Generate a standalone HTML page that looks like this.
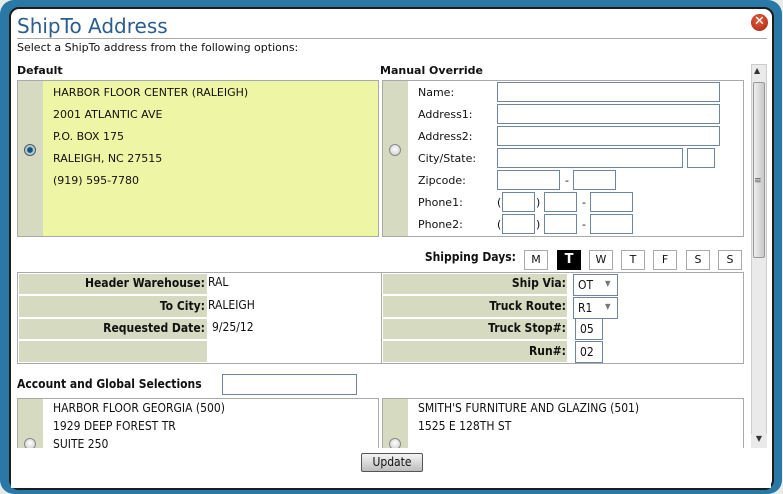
<!DOCTYPE html>
<html><head><style>
*{margin:0;padding:0;box-sizing:border-box}
body{width:783px;height:494px;overflow:hidden;background:#e8ece8;font-family:"DejaVu Sans","Liberation Sans",sans-serif;font-size:11px;color:#111;position:relative}
.a{position:absolute}
.frame{left:0;top:0;width:782px;height:494px;background:#2a78a6;border-radius:14px}
.dlg{left:9px;top:7px;width:765px;height:483px;background:#fff;border:2px solid #1c1c1c;border-radius:10px}
.inp{position:absolute;border:1px solid #6e86a0;background:#fff}
.lbl{position:absolute;font-size:11px}
.b{font-weight:bold}
.gray{position:absolute;background:#d6dac0}
.radio{position:absolute;width:12px;height:12px;border-radius:50%;border:1px solid #888;background:radial-gradient(circle at 50% 40%,#fff,#c8c8c8)}
.day{position:absolute;top:250px;width:24px;height:20px;border:1px solid #aaa;text-align:center;line-height:18px;font-size:11px;background:#fff}
.c{font-family:"DejaVu Sans Condensed","DejaVu Sans",sans-serif;font-size:12px}
.rl{position:absolute;text-align:right;font-weight:bold;font-family:"DejaVu Sans Condensed","DejaVu Sans",sans-serif;font-size:12px}
</style></head><body>
<div class="a frame"></div>
<div class="a dlg"></div>
<div class="a" style="left:17px;top:14px;font-size:20px;color:#2b5e8e;font-family:'DejaVu Sans',sans-serif">ShipTo Address</div>
<div class="a" style="left:17px;top:38px;width:750px;height:1px;background:#aaa"></div>
<div class="a" style="left:751px;top:14px;width:17px;height:17px;border-radius:50%;background:radial-gradient(circle at 45% 35%,#e06040,#a82010);color:#fff;font-weight:bold;font-size:13px;text-align:center;line-height:16px">✕</div>
<div class="lbl" style="left:17px;top:41px">Select a ShipTo address from the following options:</div>
<div class="lbl b" style="left:17px;top:64px">Default</div>
<div class="lbl b" style="left:380px;top:64px">Manual Override</div>
<!-- scrollbar -->
<div class="a" style="left:751px;top:64px;width:16px;height:384px;background:#eaeaea;border:1px solid #ccc"></div>
<div class="a" style="left:753px;top:82px;width:12px;height:176px;background:linear-gradient(90deg,#eee,#c8c8c8);border:1px solid #999;border-radius:2px"></div>
<div class="a" style="left:754px;top:66px;font-size:8px;color:#333">▲</div>
<div class="a" style="left:754px;top:176px;font-size:9px;color:#555">≡</div>
<div class="a" style="left:754px;top:434px;font-size:8px;color:#333">▼</div>
<!-- default box -->
<div class="a" style="left:17px;top:80px;width:362px;height:157px;border:1px solid #aaa;background:#eef5a4"></div>
<div class="gray" style="left:18px;top:81px;width:25px;height:155px"></div>
<div class="a" style="left:24px;top:144px;width:12px;height:12px;border-radius:50%;border:1px solid #556;background:radial-gradient(circle,#1a4f80 35%,#9cc 45%,#ddd)"></div>
<div class="lbl" style="left:53px;top:86px">HARBOR FLOOR CENTER (RALEIGH)</div>
<div class="lbl" style="left:53px;top:108px">2001 ATLANTIC AVE</div>
<div class="lbl" style="left:53px;top:130px">P.O. BOX 175</div>
<div class="lbl" style="left:53px;top:152px">RALEIGH, NC 27515</div>
<div class="lbl" style="left:53px;top:174px">(919) 595-7780</div>
<!-- manual -->
<div class="a" style="left:382px;top:80px;width:362px;height:157px;border:1px solid #aaa;background:#fff"></div>
<div class="gray" style="left:383px;top:81px;width:25px;height:155px"></div>
<div class="radio" style="left:389px;top:144px"></div>
<div class="lbl" style="left:418px;top:86px">Name:</div>
<div class="lbl" style="left:418px;top:108px">Address1:</div>
<div class="lbl" style="left:418px;top:130px">Address2:</div>
<div class="lbl" style="left:418px;top:152px">City/State:</div>
<div class="lbl" style="left:418px;top:174px">Zipcode:</div>
<div class="lbl" style="left:418px;top:196px">Phone1:</div>
<div class="lbl" style="left:418px;top:218px">Phone2:</div>
<div class="inp" style="left:497px;top:82px;width:223px;height:20px"></div>
<div class="inp" style="left:497px;top:104px;width:223px;height:20px"></div>
<div class="inp" style="left:497px;top:126px;width:223px;height:20px"></div>
<div class="inp" style="left:497px;top:148px;width:186px;height:20px"></div>
<div class="inp" style="left:687px;top:148px;width:28px;height:20px"></div>
<div class="inp" style="left:497px;top:170px;width:63px;height:20px"></div>
<div class="lbl" style="left:565px;top:174px">-</div>
<div class="inp" style="left:573px;top:170px;width:43px;height:20px"></div>
<div class="lbl" style="left:497px;top:196px">(</div><div class="inp" style="left:502px;top:192px;width:33px;height:20px"></div><div class="lbl" style="left:536px;top:196px">)</div>
<div class="inp" style="left:544px;top:192px;width:33px;height:20px"></div><div class="lbl" style="left:582px;top:196px">-</div><div class="inp" style="left:590px;top:192px;width:43px;height:20px"></div>
<div class="lbl" style="left:497px;top:218px">(</div><div class="inp" style="left:502px;top:214px;width:33px;height:20px"></div><div class="lbl" style="left:536px;top:218px">)</div>
<div class="inp" style="left:544px;top:214px;width:33px;height:20px"></div><div class="lbl" style="left:582px;top:218px">-</div><div class="inp" style="left:590px;top:214px;width:43px;height:20px"></div>
<!-- shipping days -->
<div class="rl" style="left:400px;top:250px;width:116px">Shipping Days:</div>
<div class="day" style="left:524px">M</div>
<div class="day" style="left:557px;background:#000;color:#fff;border-color:#000;font-weight:bold;font-size:13px">T</div>
<div class="day" style="left:589px">W</div>
<div class="day" style="left:621px">T</div>
<div class="day" style="left:653px">F</div>
<div class="day" style="left:686px">S</div>
<div class="day" style="left:718px">S</div>
<!-- table -->
<div class="a" style="left:17px;top:272px;width:727px;height:92px;border:1px solid #aaa;background:#fff"></div>
<div class="a" style="left:381px;top:273px;width:1px;height:90px;background:#aaa"></div>
<div class="gray" style="left:19px;top:274px;width:188px;height:20px"></div>
<div class="gray" style="left:19px;top:296px;width:188px;height:21px"></div>
<div class="gray" style="left:19px;top:319px;width:188px;height:20px"></div>
<div class="gray" style="left:19px;top:341px;width:188px;height:21px"></div>
<div class="gray" style="left:383px;top:274px;width:184px;height:20px"></div>
<div class="gray" style="left:383px;top:296px;width:184px;height:21px"></div>
<div class="gray" style="left:383px;top:319px;width:184px;height:20px"></div>
<div class="gray" style="left:383px;top:341px;width:184px;height:21px"></div>
<div class="rl" style="left:19px;top:276px;width:186px">Header Warehouse:</div>
<div class="rl" style="left:19px;top:299px;width:186px">To City:</div>
<div class="rl" style="left:19px;top:321px;width:186px">Requested Date:</div>
<div class="lbl c" style="left:208px;top:275px">RAL</div>
<div class="lbl c" style="left:208px;top:298px">RALEIGH</div>
<div class="lbl c" style="left:212px;top:320px">9/25/12</div>
<div class="rl" style="left:383px;top:276px;width:183px">Ship Via:</div>
<div class="rl" style="left:383px;top:299px;width:183px">Truck Route:</div>
<div class="rl" style="left:383px;top:321px;width:183px">Truck Stop#:</div>
<div class="rl" style="left:383px;top:344px;width:183px">Run#:</div>
<div class="inp c" style="left:573px;top:274px;width:45px;height:22px;padding:3px 0 0 4px">OT<span style="position:absolute;left:31px;top:4px;font-size:8px;color:#777">▼</span></div>
<div class="inp c" style="left:573px;top:297px;width:45px;height:22px;padding:3px 0 0 4px">R1<span style="position:absolute;left:31px;top:4px;font-size:8px;color:#777">▼</span></div>
<div class="inp c" style="left:575px;top:318px;width:28px;height:22px;padding:3px 0 0 4px">05</div>
<div class="inp c" style="left:575px;top:341px;width:28px;height:22px;padding:3px 0 0 4px">02</div>
<!-- account -->
<div class="rl" style="left:17px;top:377px;text-align:left">Account and Global Selections</div>
<div class="inp" style="left:222px;top:374px;width:135px;height:21px"></div>
<div class="a" style="left:17px;top:398px;width:362px;height:52px;border:1px solid #aaa;border-bottom:none;background:#fff"></div>
<div class="gray" style="left:18px;top:399px;width:25px;height:49px"></div>
<div class="radio" style="left:24px;top:438px"></div>
<div class="lbl c" style="left:53px;top:401px">HARBOR FLOOR GEORGIA (500)</div>
<div class="lbl c" style="left:53px;top:419px">1929 DEEP FOREST TR</div>
<div class="lbl c" style="left:53px;top:437px">SUITE 250</div>
<div class="a" style="left:382px;top:398px;width:362px;height:52px;border:1px solid #aaa;border-bottom:none;background:#fff"></div>
<div class="gray" style="left:383px;top:399px;width:25px;height:49px"></div>
<div class="radio" style="left:389px;top:438px"></div>
<div class="lbl c" style="left:418px;top:401px">SMITH'S FURNITURE AND GLAZING (501)</div>
<div class="lbl c" style="left:418px;top:419px">1525 E 128TH ST</div>
<div class="a" style="left:11px;top:448px;width:760px;height:40px;background:#fff"></div>
<div class="a" style="left:751px;top:434px;width:16px;height:14px;background:#eaeaea;font-size:8px;color:#333;text-align:center">▼</div>
<div class="a c" style="left:361px;top:453px;width:62px;height:19px;border:1px solid #555;border-radius:2px;background:linear-gradient(#f4f4f4,#bdbdbd);text-align:center;line-height:17px">Update</div>
</body></html>
